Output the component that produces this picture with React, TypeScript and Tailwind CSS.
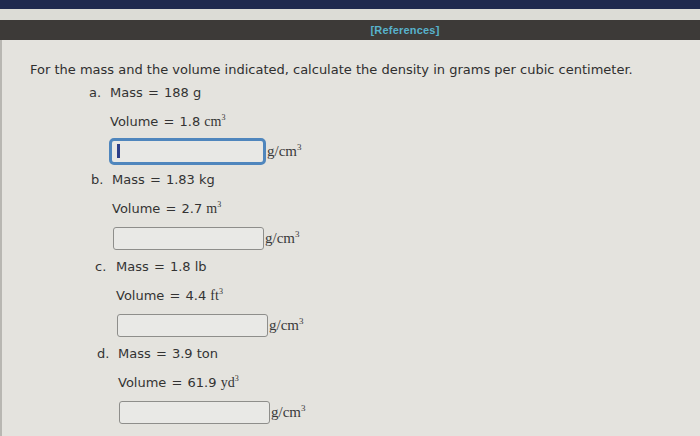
import React from "react";

type Item = {
  letter: string;
  mass: string;
  massUnit: string;
  vol: string;
  volUnit: string;
  pad: string;
  focused?: boolean;
};

const items: Item[] = [
  { letter: "a.", mass: "188", massUnit: "g", vol: "1.8", volUnit: "cm", pad: "pl-[87px]", focused: true },
  { letter: "b.", mass: "1.83", massUnit: "kg", vol: "2.7", volUnit: "m", pad: "pl-[89px]" },
  { letter: "c.", mass: "1.8", massUnit: "lb", vol: "4.4", volUnit: "ft", pad: "pl-[93px]" },
  { letter: "d.", mass: "3.9", massUnit: "ton", vol: "61.9", volUnit: "yd", pad: "pl-[95px]" },
];

const serif = "font-['Liberation_Serif','Times_New_Roman',serif]";

function Unit() {
  return (
    <span className={`${serif} text-[15px] text-[#3a3a3a] ml-[1px] leading-none`}>
      g/cm<sup className="text-[9px] -top-[6px]">3</sup>
    </span>
  );
}

function Row({ it }: { it: Item }) {
  return (
    <div className={`${it.pad} flex flex-col`}>
      <div className="flex items-center h-[20px]">
        <span className="w-[21px]">{it.letter}</span>
        <span>
          Mass <span className="mx-[1px]">=</span> {it.mass} {it.massUnit}
        </span>
      </div>
      <div className="flex items-center h-[20px] mt-[8px] pl-[21px]">
        <span>
          Volume <span className="mx-[1px]">=</span> {it.vol}{" "}
          <span className={`${serif} text-[14px]`}>
            {it.volUnit}
            <sup className="text-[8px] -top-[6px]">3</sup>
          </span>
        </span>
      </div>
      <div className="flex items-center mt-[7px] pl-[22px] h-[26px]">
        {it.focused ? (
          <div className="w-[157px] h-[27px] rounded-[5px] border-[3px] border-[#4f86bd] bg-[#e8e8e5] flex items-center pl-[5px] shrink-0 -ml-[2px]">
            <div className="w-[3px] h-[14px] bg-[#2c3f8a]" />
          </div>
        ) : (
          <div className="w-[151px] h-[23px] rounded-[3px] border border-[#8e8e8b] bg-[#e9e9e6] shrink-0" />
        )}
        <Unit />
      </div>
    </div>
  );
}

export default function App() {
  return (
    <div className="w-[700px] h-[436px] overflow-hidden bg-[#e4e3de] flex flex-col font-['DejaVu_Sans','Verdana',sans-serif] text-[#333333]">
      <div className="h-[9px] bg-[#1f2a4f] shrink-0" />
      <div className="h-[11px] bg-[#dcdcd6] shrink-0" />
      <div className="h-[20px] bg-[#3d3a38] shrink-0 flex items-center justify-center">
        <span className="ml-[110px] text-[11px] font-bold text-[#58b2cc] font-['Liberation_Sans',Arial,sans-serif] tracking-[0.2px]">
          [References]
        </span>
      </div>
      <div className="flex-1 border-l-[2px] border-[#b8b7b2] flex flex-col">
        <div className="pl-[28px] pt-[21px] text-[13px] leading-[18px] text-[#2f2f2f]">
          For the mass and the volume indicated, calculate the density in grams per cubic centimeter.
        </div>
        <div className="flex flex-col gap-[6px] mt-[4px] text-[13px]">
          {items.map((it) => (
            <Row key={it.letter} it={it} />
          ))}
        </div>
      </div>
    </div>
  );
}
